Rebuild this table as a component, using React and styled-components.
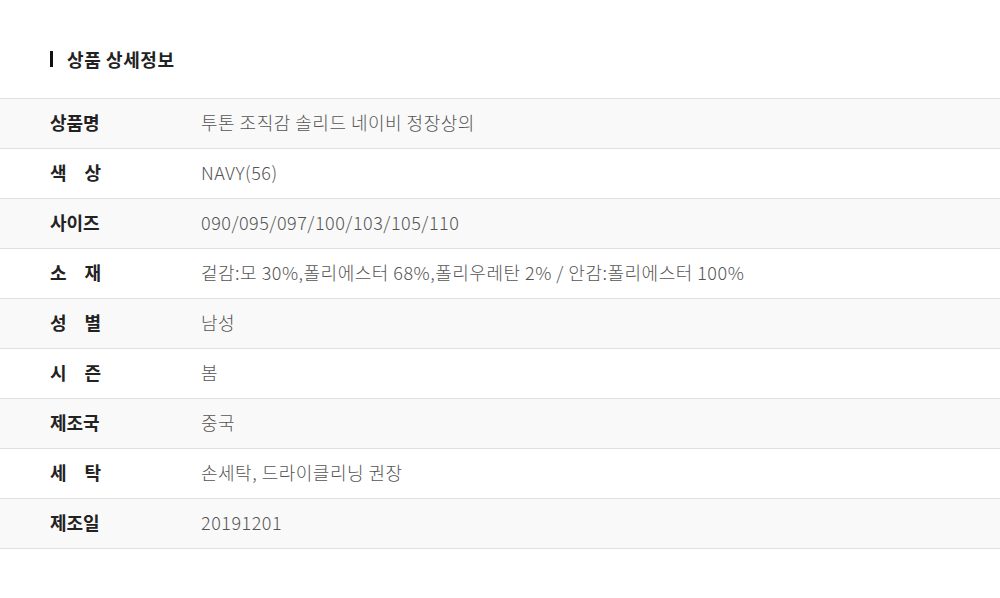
import React from "react";
import styled, { createGlobalStyle } from "styled-components";

const Global = createGlobalStyle`
  html, body { margin: 0; padding: 0; background: #fff; }
  body { font-family: "Noto Sans CJK KR", "Noto Sans", sans-serif; }
`;

const Page = styled.div`
  width: 1000px;
  padding-top: 48px;
`;

const Title = styled.h2`
  margin: 0 0 28px 50px;
  display: flex;
  align-items: center;
  gap: 14px;
  font-size: 18px;
  font-weight: 700;
  color: #222;
  line-height: 22px;
  letter-spacing: 0.6px;
  &::before {
    content: "";
    width: 3px;
    height: 16px;
    background: #111;
  }
`;

const Table = styled.div`
  border-top: 1px solid #e0e0e0;
`;

const Row = styled.div`
  display: flex;
  align-items: center;
  height: 49px;
  padding-bottom: 3px;
  box-sizing: border-box;
  height: 50px;
  border-bottom: 1px solid #e0e0e0;
  background: ${(p) => (p.$shaded ? "#f9f9f9" : "#fff")};
`;

const Label = styled.div`
  margin-left: 50px;
  width: 51px;
  font-size: 18px;
  font-weight: 700;
  color: #222;
  text-align: justify;
  text-align-last: justify;
  white-space: nowrap;
`;

const Value = styled.div`
  margin-left: 100px;
  font-size: 18px;
  font-weight: 300;
  color: #555;
  letter-spacing: 0.5px;
`;

const rows = [
  ["상품명", "투톤 조직감 솔리드 네이비 정장상의"],
  ["색 상", "NAVY(56)"],
  ["사이즈", "090/095/097/100/103/105/110"],
  ["소 재", "겉감:모 30%,폴리에스터 68%,폴리우레탄 2% / 안감:폴리에스터 100%"],
  ["성 별", "남성"],
  ["시 즌", "봄"],
  ["제조국", "중국"],
  ["세 탁", "손세탁, 드라이클리닝 권장"],
  ["제조일", "20191201"],
];

export default function App() {
  return (
    <Page>
      <Global />
      <Title>상품 상세정보</Title>
      <Table>
        {rows.map(([k, v], i) => (
          <Row key={k} $shaded={i % 2 === 0}>
            <Label>{k}</Label>
            <Value>{v}</Value>
          </Row>
        ))}
      </Table>
    </Page>
  );
}
